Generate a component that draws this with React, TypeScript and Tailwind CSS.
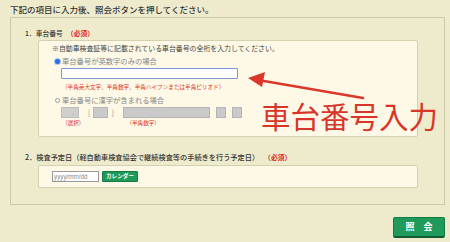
import React from "react";

const font = { fontFamily: '"Noto Sans CJK JP", "Noto Sans", sans-serif' };

export default function App() {
  return (
    <div
      className="relative w-[450px] h-[242px] overflow-hidden bg-[#eeebcc] text-[#333]"
      style={font}
    >
      <div className="flex flex-col">
        {/* header */}
        <div className="h-[17px] pl-[10px] pt-[4px] text-[8.5px] leading-[10px] font-medium text-[#333] whitespace-nowrap">
          下記の項目に入力後、照会ボタンを押してください。
        </div>

        {/* outer panel */}
        <div className="ml-[10px] w-[435px] h-[188px] border border-[#c9caa6] bg-[#eeebcc] flex flex-col">
          {/* item 1 label */}
          <div className="mt-[11px] h-[9px] pl-[14px] flex items-center text-[6.8px] leading-[9px] font-medium text-[#333]">
            <span>1．車台番号</span>
            <span className="ml-[4px] text-[#e0201a] font-bold">（必須）</span>
          </div>

          {/* inner box 1 */}
          <div className="mt-[2px] ml-[27px] w-[380px] h-[97px] border border-[#d3d1b0] bg-[#fdf9e6] rounded-[2px] flex flex-col">
            <div className="mt-[3px] h-[9px] pl-[13px] flex items-center text-[6.9px] leading-[9px] text-[#444] whitespace-nowrap">
              ※自動車検査証等に記載されている車台番号の全桁を入力してください。
            </div>
            <div className="mt-[3px] h-[10px] pl-[16px] flex items-center text-[7.3px] leading-[10px] text-[#888] whitespace-nowrap">
              <span className="w-[5px] h-[5px] rounded-full bg-[#2a6ee8] ring-1 ring-[#a9c4f0] mr-[2px]" />
              車台番号が英数字のみの場合
            </div>
            <div className="mt-[2px] ml-[22px] w-[177px] h-[11px] border border-[#7b97d4] bg-white rounded-[1px]" />
            <div className="mt-[4px] h-[8px] pl-[23px] flex items-center text-[5.6px] leading-[8px] text-[#e0352a] whitespace-nowrap">
              （半角英大文字、半角数字、半角ハイフンまたは半角ピリオド）
            </div>
            <div className="mt-[4px] h-[10px] pl-[16px] flex items-center text-[7.3px] leading-[10px] text-[#888] whitespace-nowrap">
              <span className="w-[5px] h-[5px] rounded-full border border-[#999] bg-white mr-[2px]" />
              車台番号に漢字が含まれる場合
            </div>
            <div className="mt-[2px] ml-[22px] h-[11px] flex items-center">
              <div className="w-[18px] h-[11px] bg-[#cfcfcf] border border-[#bdbdbd] flex items-center justify-end pr-[3px] text-[5px] text-[#999]">
                ⌄
              </div>
              <span className="ml-[9px] text-[7px] text-[#888] leading-[11px]">[</span>
              <div className="ml-[3px] w-[15px] h-[11px] bg-[#cacaca] border border-[#b5b5b5]" />
              <span className="ml-[3px] text-[7px] text-[#888] leading-[11px]">]</span>
              <div className="ml-[9px] w-[87px] h-[11px] bg-[#cacaca] border border-[#b5b5b5]" />
              <div className="ml-[6px] w-[10px] h-[11px] bg-[#cacaca] border border-[#b5b5b5]" />
              <div className="ml-[6px] w-[10px] h-[11px] bg-[#cacaca] border border-[#b5b5b5]" />
            </div>
            <div className="mt-[1px] ml-[23px] h-[8px] flex items-center text-[5.6px] leading-[8px] text-[#e0352a] whitespace-nowrap">
              <span>（選択）</span>
              <span className="ml-[42px]">（半角数字）</span>
            </div>
          </div>

          {/* item 2 label */}
          <div className="mt-[16px] h-[9px] pl-[14px] flex items-center text-[7.2px] leading-[9px] font-medium text-[#333] whitespace-nowrap">
            <span>2．検査予定日（軽自動車検査協会で継続検査等の手続きを行う予定日）</span>
            <span className="ml-[5px] text-[6.8px] text-[#e0201a] font-bold">（必須）</span>
          </div>

          {/* inner box 2 */}
          <div className="mt-[3px] ml-[27px] w-[380px] h-[23px] border border-[#d3d1b0] bg-[#fdf9e6] rounded-[2px] flex items-center pl-[13px]">
            <div className="w-[47px] h-[11px] border border-[#999] bg-white flex items-center pl-[1px] text-[6.3px] leading-[9px] text-[#888]" style={{ fontFamily: '"Liberation Sans", Arial, sans-serif' }}>
              yyyy/mm/dd
            </div>
            <div className="ml-[3px] w-[36px] h-[11px] bg-[#1e9b58] border border-[#177a45] rounded-[1px] flex items-center justify-center text-[5.6px] leading-[9px] font-bold text-white">
              カレンダー
            </div>
          </div>
        </div>

        {/* submit */}
        <div className="mt-[12px] flex justify-end pr-[5px]">
          <div className="w-[52px] h-[21px] bg-[#1f9a5a] border border-[#167a44] border-b-[2px] border-b-[#0f5c33] rounded-[2px] flex items-center justify-center text-[9px] font-bold text-white tracking-[9px] pl-[9px]">
            照会
          </div>
        </div>
      </div>

      {/* annotation arrow */}
      <svg className="absolute left-0 top-0" width="450" height="242" viewBox="0 0 450 242">
        <line x1="363" y1="98" x2="258" y2="80" stroke="#d9382a" strokeWidth="2.6" strokeLinecap="round" />
        <polygon points="248,78 265,72 262,87" fill="#d9382a" />
      </svg>

      {/* annotation text */}
      <div className="absolute left-[261px] top-[97px] text-[29.5px] leading-[36px] text-[#d8362a] whitespace-nowrap">
        車台番号入力
      </div>
    </div>
  );
}
